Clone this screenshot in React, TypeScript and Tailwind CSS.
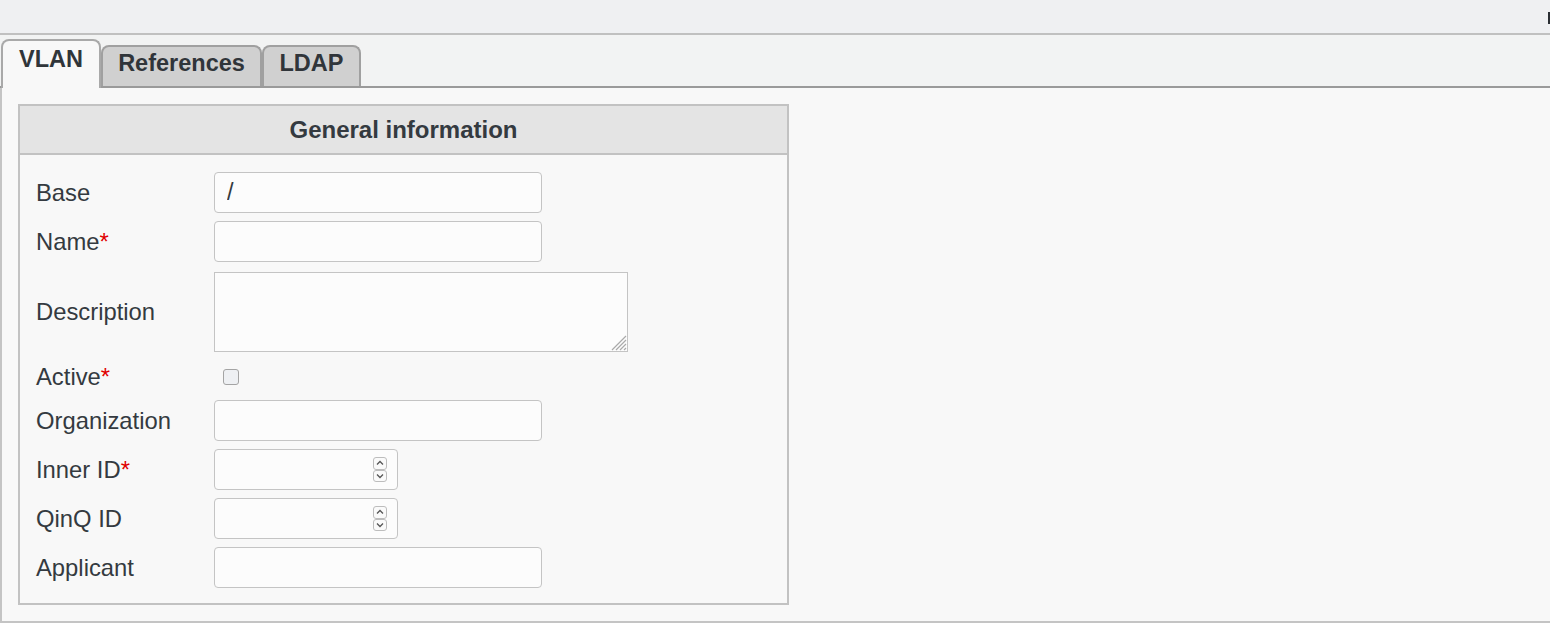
import React from 'react';

const font = { fontFamily: '"Liberation Sans", Arial, sans-serif' };

const Req = () => <span className="text-[#e00000]">*</span>;

const TextInput: React.FC<{ value?: string; width?: string }> = ({ value = '', width = 'w-[328px]' }) => (
  <input
    type="text"
    defaultValue={value}
    className={`${width} h-[41px] rounded-[4px] border border-[#c4c4c4] bg-[#fcfcfc] px-3 text-[23.5px] text-[#343a40] outline-none`}
  />
);

// number field with the small stacked spin buttons
const NumberInput: React.FC = () => (
  <div className="flex h-[41px] w-[184px] items-center rounded-[4px] border border-[#c4c4c4] bg-[#fcfcfc] pr-[10px]">
    <input type="text" className="h-full min-w-0 flex-1 bg-transparent px-3 outline-none" />
    <div className="flex flex-col">
      <div className="flex h-[12.5px] w-[14px] items-center justify-center rounded-[3px] border border-[#bdbdbd] bg-[#fafafa]">
        <svg width="8" height="6" viewBox="0 0 8 6">
          <path d="M1 4.5 L4 1.5 L7 4.5" fill="none" stroke="#555" strokeWidth="1.3" />
        </svg>
      </div>
      <div className="flex h-[12.5px] w-[14px] items-center justify-center rounded-[3px] border border-[#bdbdbd] bg-[#fafafa]">
        <svg width="8" height="6" viewBox="0 0 8 6">
          <path d="M1 1.5 L4 4.5 L7 1.5" fill="none" stroke="#555" strokeWidth="1.3" />
        </svg>
      </div>
    </div>
  </div>
);

const Row: React.FC<{ label: React.ReactNode; h: string; children: React.ReactNode }> = ({ label, h, children }) => (
  <div className={`flex items-center ${h}`}>
    <div className="w-[178px] shrink-0 text-[23.8px] leading-[28px] text-[#343a40]">{label}</div>
    {children}
  </div>
);

export default function App() {
  return (
    <div className="h-[623px] w-[1550px] overflow-hidden bg-[#f8f8f8]" style={font}>
      {/* top bar */}
      <div className="flex h-[35px] items-start justify-end border-b-2 border-[#c0c0c0] bg-[#eff0f2]">
        <div className="mt-[12px] h-[12px] w-[2px] bg-[#2a2e33]" />
      </div>

      {/* tab strip */}
      <div className="flex h-[53px] items-end border-b-2 border-[#9a9a9a] bg-[#f2f3f3] pl-px">
        <div className="relative z-10 -mb-[2px] h-[49px] w-[100px] rounded-t-[8px] border-2 border-b-0 border-[#a9a9a9] bg-[#f8f8f8] pt-[4px] text-center text-[23.5px] font-bold leading-[28px] text-[#30353a]">
          VLAN
        </div>
        <div className="h-[41px] w-[161px] rounded-t-[8px] border-2 border-b-0 border-[#a0a0a0] bg-[#d0d0d0] pt-[2px] text-center text-[23.5px] font-bold leading-[28px] text-[#30353a]">
          References
        </div>
        <div className="h-[41px] w-[99px] rounded-t-[8px] border-2 border-b-0 border-[#a0a0a0] bg-[#d0d0d0] pt-[2px] text-center text-[23.5px] font-bold leading-[28px] text-[#30353a]">
          LDAP
        </div>
      </div>

      {/* tab content */}
      <div className="h-[535px] border-b-2 border-l-2 border-[#c4c4c4] pl-4 pt-4">
        <div className="w-[771px] border-2 border-[#c2c2c2]">
          <div className="flex h-[49px] items-center justify-center border-b-2 border-[#c2c2c2] bg-[#e4e4e4] text-[24px] font-bold text-[#343a40]">
            General information
          </div>
          <div className="flex flex-col pb-[15px] pl-4 pt-[17px]">
            <Row label="Base" h="h-[41px] mb-2">
              <TextInput value="/" />
            </Row>
            <Row label={<>Name<Req /></>} h="h-[41px] mb-2">
              <TextInput />
            </Row>
            <Row label="Description" h="h-[84px] mb-2">
              <div className="relative h-[80px] w-[414px] border border-[#c4c4c4] bg-[#fcfcfc]">
                <svg className="absolute bottom-0 right-0" width="20" height="20" viewBox="0 0 20 20">
                  <path d="M19 5 L5 19 M19 9 L9 19 M19 13 L13 19 M19 17 L17 19" stroke="#aaa" strokeWidth="1.2" />
                </svg>
              </div>
            </Row>
            <Row label={<>Active<Req /></>} h="h-[30px] mb-2">
              <div className="ml-[9px] h-[16px] w-[16px] rounded-[3px] border border-[#a4a4a4] bg-[#eef0f3]" />
            </Row>
            <Row label="Organization" h="h-[41px] mb-2">
              <TextInput />
            </Row>
            <Row label={<>Inner ID<Req /></>} h="h-[41px] mb-2">
              <NumberInput />
            </Row>
            <Row label="QinQ ID" h="h-[41px] mb-2">
              <NumberInput />
            </Row>
            <Row label="Applicant" h="h-[41px]">
              <TextInput />
            </Row>
          </div>
        </div>
      </div>
    </div>
  );
}
